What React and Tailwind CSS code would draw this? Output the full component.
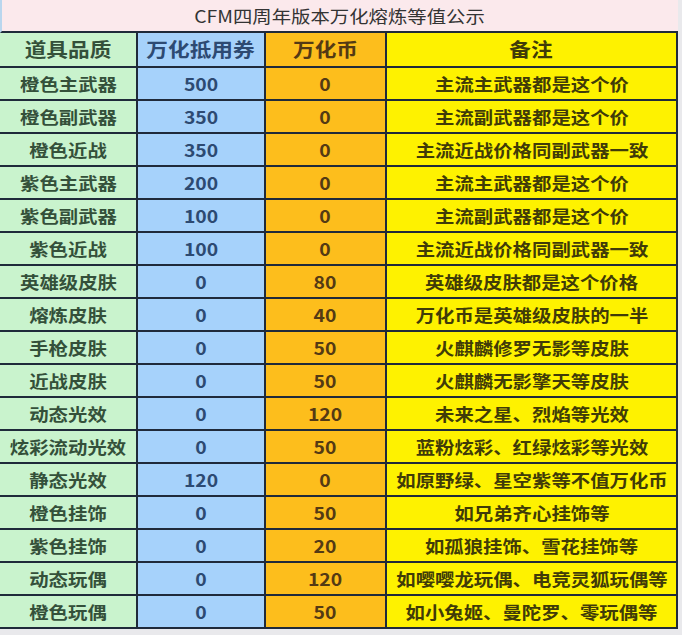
const rows = [
  ["橙色主武器", "500", "0", "主流主武器都是这个价"],
  ["橙色副武器", "350", "0", "主流副武器都是这个价"],
  ["橙色近战", "350", "0", "主流近战价格同副武器一致"],
  ["紫色主武器", "200", "0", "主流主武器都是这个价"],
  ["紫色副武器", "100", "0", "主流副武器都是这个价"],
  ["紫色近战", "100", "0", "主流近战价格同副武器一致"],
  ["英雄级皮肤", "0", "80", "英雄级皮肤都是这个价格"],
  ["熔炼皮肤", "0", "40", "万化币是英雄级皮肤的一半"],
  ["手枪皮肤", "0", "50", "火麒麟修罗无影等皮肤"],
  ["近战皮肤", "0", "50", "火麒麟无影擎天等皮肤"],
  ["动态光效", "0", "120", "未来之星、烈焰等光效"],
  ["炫彩流动光效", "0", "50", "蓝粉炫彩、红绿炫彩等光效"],
  ["静态光效", "120", "0", "如原野绿、星空紫等不值万化币"],
  ["橙色挂饰", "0", "50", "如兄弟齐心挂饰等"],
  ["紫色挂饰", "0", "20", "如孤狼挂饰、雪花挂饰等"],
  ["动态玩偶", "0", "120", "如嘤嘤龙玩偶、电竞灵狐玩偶等"],
  ["橙色玩偶", "0", "50", "如小兔姬、曼陀罗、零玩偶等"],
];

const font = { fontFamily: '"Noto Sans CJK SC", "Noto Sans", sans-serif' };

// the screenshot is a bit stretched sideways, so text is widened a little
const T = ({ children }) => (
  <span className="inline-block whitespace-nowrap scale-x-[1.14]">{children}</span>
);

const cell = "flex items-center justify-center border-r-2 border-[#1f2a3a]";

export default function App() {
  return (
    <div className="w-[682px] h-[635px] bg-[#e9e9ec] overflow-hidden" style={font}>
      <div className="w-[678px] bg-white">
        {/* title */}
        <div className="h-[33px] flex items-center justify-center bg-[#fbe9ec] border-l-2 border-[#b9d6ee] text-[17px] font-normal text-[#333] border-b-2 border-b-[#1f2a3a]">
          <T>CFM四周年版本万化熔炼等值公示</T>
        </div>

        {/* header */}
        <div className="grid grid-cols-[138px_128px_121px_1fr] h-[35px] text-[19px] font-semibold border-b-2 border-[#1f2a3a]">
          <div className={`${cell} bg-[#c9f3cd] text-[#34503a]`}><T>道具品质</T></div>
          <div className={`${cell} bg-[#a6d2fb] text-[#2d4a72]`}><T>万化抵用券</T></div>
          <div className={`${cell} bg-[#fdbe1c] text-[#543a14]`}><T>万化币</T></div>
          <div className={`${cell} bg-[#fef200] text-[#403b08]`}><T>备注</T></div>
        </div>

        {/* data rows */}
        {rows.map((r, i) => (
          <div key={i} className="grid grid-cols-[138px_128px_121px_1fr] h-[33px] text-[17px] font-semibold border-b-2 border-[#1f2a3a]">
            <div className={`${cell} bg-[#c9f3cd] text-[#34503a]`}><T>{r[0]}</T></div>
            <div className={`${cell} bg-[#a6d2fb] text-[#2d4a72]`}><T>{r[1]}</T></div>
            <div className={`${cell} bg-[#fdbe1c] text-[#543a14]`}><T>{r[2]}</T></div>
            <div className={`${cell} bg-[#fef200] text-[#403b08]`}><T>{r[3]}</T></div>
          </div>
        ))}
      </div>
    </div>
  );
}
